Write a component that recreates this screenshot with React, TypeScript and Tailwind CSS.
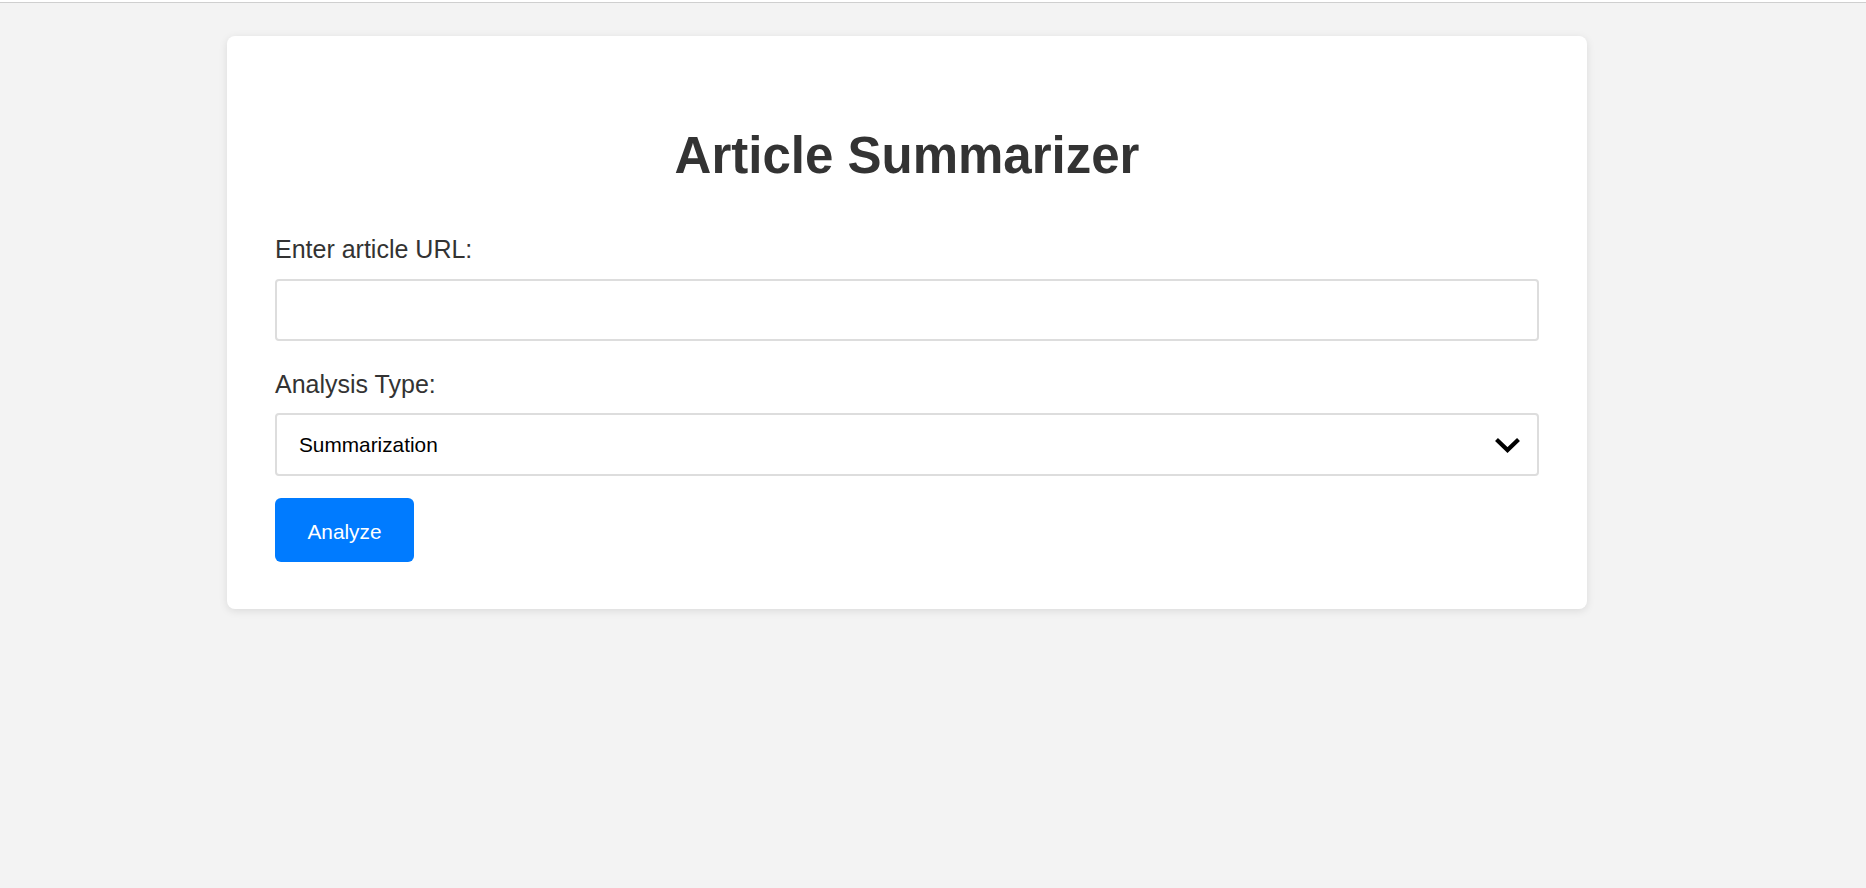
import React from "react";

export default function App() {
  return (
    <div
      className="min-h-[888px] w-full bg-[#f3f3f3]"
      style={{ fontFamily: '"Liberation Sans", Arial, sans-serif' }}
    >
      <div className="h-[2px] bg-white" />
      <div className="h-px bg-[#cfcfcf]" />
      <div className="pt-[33px] pl-[227px]">
        <div className="w-[1360px] rounded-[8px] bg-white px-[48px] pt-[48px] pb-[47px] shadow-[0_2px_8px_rgba(0,0,0,0.1)]">
          <h1 className="mt-[43px] text-center text-[51px] leading-[57px] font-bold text-[#333]">
            Article Summarizer
          </h1>
          <label className="mt-[51px] block text-[25px] leading-[29px] text-[#333]">
            Enter article URL:
          </label>
          <input
            type="text"
            className="mt-[15px] block h-[62px] w-full rounded-[4px] border-2 border-[#dddddd] bg-white px-[22px] text-[21px] text-black outline-none"
          />
          <label className="mt-[29px] block text-[25px] leading-[29px] text-[#333]">
            Analysis Type:
          </label>
          <div className="mt-[14px] flex h-[63px] w-full items-center justify-between rounded-[4px] border-2 border-[#dddddd] bg-white pl-[22px] pr-[16px]">
            <span className="text-[20.8px] text-black">Summarization</span>
            <svg width="27" height="16" viewBox="0 0 27 16" className="mt-[1px]">
              <path
                d="M2.5 2.5 L13.5 13 L24.5 2.5"
                fill="none"
                stroke="#000"
                strokeWidth="4.2"
                strokeLinecap="butt"
                strokeLinejoin="miter"
              />
            </svg>
          </div>
          <button className="mt-[22px] flex h-[64px] w-[139px] items-center justify-center rounded-[6px] bg-[#007bff] pt-[3px] text-[20.8px] text-white">
            Analyze
          </button>
        </div>
      </div>
    </div>
  );
}
